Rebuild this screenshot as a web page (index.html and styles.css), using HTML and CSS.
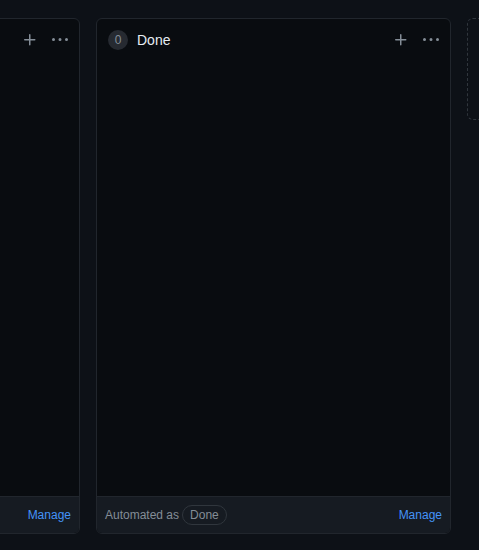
FILE: index.html
```html
<!DOCTYPE html>
<html>
<head>
<meta charset="utf-8">
<link rel="stylesheet" href="styles.css">
</head>
<body>
<div class="board">
  <section class="column">
    <header class="col-head">
      <div class="col-title"></div>
      <div class="col-actions">
        <button class="icon-btn" aria-label="Add item">
          <svg width="16" height="16" viewBox="0 0 16 16"><path d="M7.75 2a.75.75 0 0 1 .75.75V7h4.25a.75.75 0 0 1 0 1.5H8.5v4.25a.75.75 0 0 1-1.5 0V8.5H2.75a.75.75 0 0 1 0-1.5H7V2.75A.75.75 0 0 1 7.75 2Z" fill="currentColor"/></svg>
        </button>
        <button class="icon-btn" aria-label="More">
          <svg width="16" height="16" viewBox="0 0 16 16"><path d="M8 9a1.5 1.5 0 1 0 0-3 1.5 1.5 0 0 0 0 3ZM1.5 9a1.5 1.5 0 1 0 0-3 1.5 1.5 0 0 0 0 3Zm13 0a1.5 1.5 0 1 0 0-3 1.5 1.5 0 0 0 0 3Z" fill="currentColor"/></svg>
        </button>
      </div>
    </header>
    <div class="col-body"></div>
    <footer class="col-foot">
      <span class="auto"></span>
      <a class="manage" href="#">Manage</a>
    </footer>
  </section>

  <section class="column">
    <header class="col-head">
      <div class="col-title">
        <span class="count">0</span>
        <span class="name">Done</span>
      </div>
      <div class="col-actions">
        <button class="icon-btn" aria-label="Add item">
          <svg width="16" height="16" viewBox="0 0 16 16"><path d="M7.75 2a.75.75 0 0 1 .75.75V7h4.25a.75.75 0 0 1 0 1.5H8.5v4.25a.75.75 0 0 1-1.5 0V8.5H2.75a.75.75 0 0 1 0-1.5H7V2.75A.75.75 0 0 1 7.75 2Z" fill="currentColor"/></svg>
        </button>
        <button class="icon-btn" aria-label="More">
          <svg width="16" height="16" viewBox="0 0 16 16"><path d="M8 9a1.5 1.5 0 1 0 0-3 1.5 1.5 0 0 0 0 3ZM1.5 9a1.5 1.5 0 1 0 0-3 1.5 1.5 0 0 0 0 3Zm13 0a1.5 1.5 0 1 0 0-3 1.5 1.5 0 0 0 0 3Z" fill="currentColor"/></svg>
        </button>
      </div>
    </header>
    <div class="col-body"></div>
    <footer class="col-foot">
      <span class="auto">Automated as <span class="pill">Done</span></span>
      <a class="manage" href="#">Manage</a>
    </footer>
  </section>

  <div class="add-col"></div>
</div>
</body>
</html>
```

FILE: styles.css
```css
html, body {
  margin: 0;
  padding: 0;
  background: #0d1117;
  height: 100%;
  overflow: hidden;
}
body {
  font-family: "Liberation Sans", Arial, sans-serif;
  color: #e6edf3;
}
.board {
  display: flex;
  align-items: flex-start;
  gap: 16px;
  padding-top: 18px;
  margin-left: -275px;
}
.column {
  flex: 0 0 355px;
  height: 516px;
  box-sizing: border-box;
  border: 1px solid #21262d;
  border-radius: 6px;
  background: #090c10;
  display: flex;
  flex-direction: column;
  overflow: hidden;
}
.col-head {
  display: flex;
  align-items: center;
  justify-content: space-between;
  height: 42px;
  padding: 0 5px 0 11px;
}
.col-title {
  display: flex;
  align-items: center;
  gap: 9px;
}
.count {
  width: 20px;
  height: 20px;
  border-radius: 50%;
  background: #262a31;
  color: #848d97;
  font-size: 12px;
  display: flex;
  align-items: center;
  justify-content: center;
}
.name {
  font-size: 14px;
  font-weight: 500;
  color: #e6edf3;
}
.col-actions {
  display: flex;
  gap: 2px;
}
.icon-btn {
  width: 28px;
  height: 28px;
  border: 0;
  background: transparent;
  color: #848d97;
  display: flex;
  align-items: center;
  justify-content: center;
  padding: 0;
}
.col-body {
  flex: 1;
}
.col-foot {
  height: 36px;
  border-top: 1px solid #21262d;
  background: #161b22;
  display: flex;
  align-items: center;
  justify-content: space-between;
  padding: 0 8px 0 8px;
  font-size: 12px;
}
.auto {
  color: #848d97;
  display: flex;
  align-items: center;
  gap: 3px;
}
.pill {
  border: 1px solid #30363d;
  border-radius: 12px;
  padding: 1px 7px;
  color: #848d97;
  line-height: 16px;
}
.manage {
  color: #4493f8;
  text-decoration: none;
}
.add-col {
  flex: 0 0 40px;
  height: 102px;
  box-sizing: border-box;
  border: 1px dashed #30363d;
  border-radius: 6px;
}
```
